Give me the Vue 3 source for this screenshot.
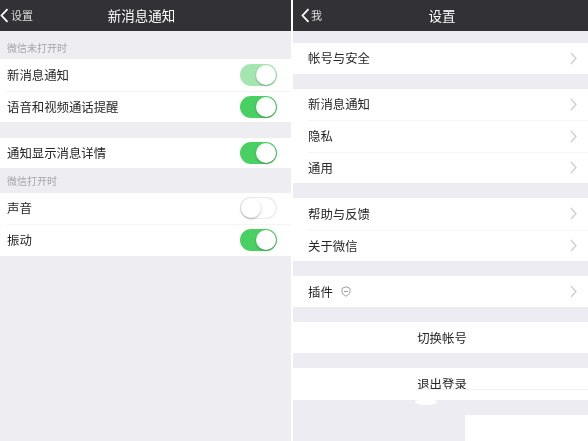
<template>
  <div class="page">
    <section class="screen left">
      <header class="nav">
        <span class="back"><svg width="9" height="15" viewBox="0 0 9 15"><path d="M7.500 1.200 1.500 7.500l6 6.300" fill="none" stroke="#fff" stroke-width="1.800"/></svg>设置</span>
        <span class="title">新消息通知</span>
      </header>
      <p class="hint first">微信未打开时</p>
      <div class="group">
        <div v-for="r in topRows" :key="r.label" class="row">
          <span>{{ r.label }}</span>
          <i class="switch" :class="r.cls"><b></b></i>
        </div>
      </div>
      <div class="group detail">
        <div class="row">
          <span>通知显示消息详情</span>
          <i class="switch on"><b></b></i>
        </div>
      </div>
      <p class="hint">微信打开时</p>
      <div class="group">
        <div v-for="r in bottomRows" :key="r.label" class="row">
          <span>{{ r.label }}</span>
          <i class="switch" :class="r.cls"><b></b></i>
        </div>
      </div>
    </section>

    <section class="screen right">
      <header class="nav">
        <span class="back"><svg width="9" height="15" viewBox="0 0 9 15"><path d="M7.500 1.200 1.500 7.500l6 6.300" fill="none" stroke="#fff" stroke-width="1.800"/></svg>我</span>
        <span class="title">设置</span>
      </header>
      <div v-for="(g, i) in groups" :key="i" class="group">
        <div v-for="item in g" :key="item" class="row">
          <span class="name">{{ item }}
            <svg v-if="item === '插件'" class="shield" width="10" height="11" viewBox="0 0 10 11"><path d="M5 .8 9 2.400V5.500c0 2.200-1.800 3.600-4 4.700C2.800 9.100 1 7.700 1 5.500V2.400Z" fill="none" stroke="#9a9fa3"/><path d="M3 5.500h4" stroke="#9a9fa3"/></svg>
          </span>
          <svg width="7" height="13" viewBox="0 0 7 13"><path d="m1 1 5 5.500L1 12" fill="none" stroke="#cbcbcf" stroke-width="1.200"/></svg>
        </div>
      </div>
      <div class="group"><div class="row center">切换帐号</div></div>
      <div class="group logout">
        <div class="row center">退出登录</div>
        <i class="streak"></i>
        <i class="blot"></i>
      </div>
      <div class="filler"></div>
    </section>
  </div>
</template>

<script setup>
const topRows = [
  { label: '新消息通知', cls: 'faded' },
  { label: '语音和视频通话提醒', cls: 'on' }
]
const bottomRows = [
  { label: '声音', cls: '' },
  { label: '振动', cls: 'on' }
]
const groups = [
  ['帐号与安全'],
  ['新消息通知', '隐私', '通用'],
  ['帮助与反馈', '关于微信'],
  ['插件']
]
</script>

<style>
html, body { margin: 0; background: #fff; }
</style>

<style scoped>
.page {
  display: flex;
  width: 588px;
  height: 441px;
  overflow: hidden;
  background: #fff;
  font-family: "Noto Sans CJK SC", "Liberation Sans", sans-serif;
  color: #262626;
  filter: blur(0.4px);
}
.screen {
  display: flex;
  flex-direction: column;
  height: 441px;
  background: #eeeef2;
}
.left { width: 291px; }
.right {
  width: 295px;
  margin-left: 2px;
  background: #ececf2;
}
.nav {
  position: relative;
  flex: none;
  box-sizing: border-box;
  display: flex;
  align-items: center;
  justify-content: center;
  height: 31px;
  padding-bottom: 2px;
  background: #323136;
  color: #fff;
}
.left .nav { padding-right: 8px; }
.right .nav { padding-left: 3px; }
.title { font-size: 13.5px; }
.back {
  position: absolute;
  left: 0;
  top: 0;
  height: 30px;
  display: flex;
  align-items: center;
  gap: 2px;
  font-size: 11px;
  color: #dcdcdc;
}
.right .back { left: 8px; gap: 1px; }
.hint {
  margin: 0;
  height: 25px;
  padding-left: 7px;
  font-size: 10px;
  line-height: 26px;
  color: #a6a6aa;
}
.hint.first {
  height: 28px;
  line-height: 34px;
}
.group {
  flex: none;
  margin-top: 15px;
  background: #fff;
}
.left .group + .group { margin-top: 15.5px; }
.hint + .group { margin-top: 0; }
.right .nav + .group { margin-top: 11.5px; }
.row {
  box-sizing: border-box;
  display: flex;
  align-items: center;
  justify-content: space-between;
  height: 31.5px;
  margin-left: 7px;
  padding-right: 14px;
  font-size: 12.400px;
  border-top: 1px solid #f5f5f6;
}
.row:first-child { border-top: none; }
.row:only-child { height: 31px; }
.detail .row { height: 30px; }
.right .row {
  margin-left: 15px;
  padding-right: 11px;
}
.right .row.center {
  justify-content: center;
  margin-left: 0;
  padding: 0 0 0 3px;
}
.name {
  display: flex;
  align-items: center;
  gap: 8px;
}
.shield { flex: none; }
.switch {
  position: relative;
  display: block;
  width: 37px;
  height: 22px;
  border-radius: 11px;
  background: #fff;
  box-shadow: inset 0 0 0 1px #e8e8ea;
}
.switch b {
  position: absolute;
  top: 1px;
  left: 1px;
  width: 20px;
  height: 20px;
  border-radius: 50%;
  background: #fff;
  box-shadow: 0 1px 2px rgba(0, 0, 0, .3);
}
.switch.on { background: #48d162; box-shadow: none; }
.switch.faded { background: #a5e6b0; box-shadow: none; }
.switch.on b, .switch.faded b { left: 16px; }
.logout { position: relative; }
/* watermark remains over the last row */
.streak {
  position: absolute;
  left: 125px;
  right: 0;
  bottom: 10px;
  height: 1px;
  background: #f1f1f3;
}
.blot {
  position: absolute;
  left: 122px;
  bottom: -5px;
  width: 22px;
  height: 6px;
  border-radius: 50%;
  background: #fff;
}
.filler {
  flex: 1;
  margin-top: 15px;
  margin-left: 172px;
  background: #fff;
}
</style>
